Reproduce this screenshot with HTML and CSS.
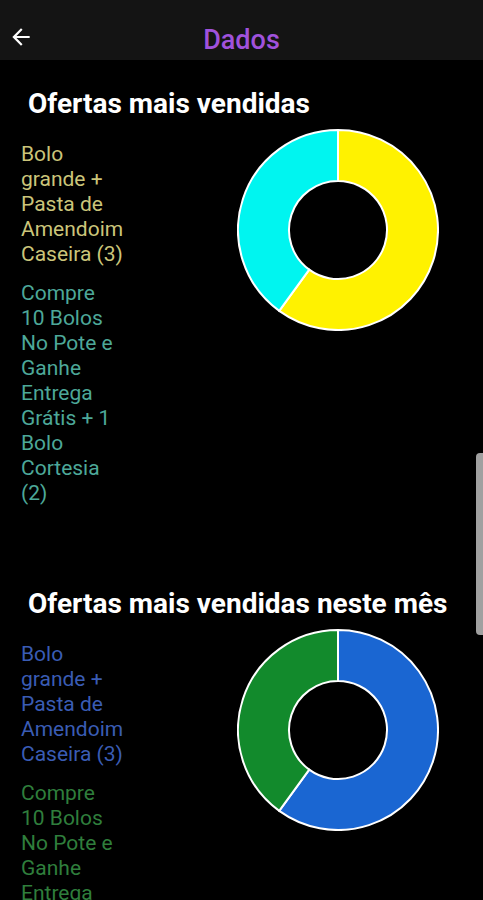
FILE: index.html
```html
<!DOCTYPE html>
<html lang="pt">
<head>
  <meta charset="UTF-8">
  <meta name="viewport" content="width=device-width, initial-scale=1.0">
  <title>Dados</title>
  <link rel="stylesheet" href="styles.css">
</head>
<body>
  <div class="header">
    <svg class="back" viewBox="0 0 24 24" width="26" height="26"><path d="M20 11H7.83l5.59-5.59L12 4l-8 8 8 8 1.41-1.41L7.83 13H20v-2z" fill="#fff"/></svg>
    <h1>Dados</h1>
  </div>

  <div class="content">
    <div class="section">
      <h2>Ofertas mais vendidas</h2>
      <div class="row">
        <div class="legend">
          <p class="c-yellow">Bolo grande + Pasta de Amendoim Caseira (3)</p>
          <p class="c-teal">Compre 10&nbsp;Bolos No Pote e Ganhe Entrega Grátis + 1 Bolo Cortesia (2)</p>
        </div>
        <svg class="donut" viewBox="0 0 202 202" width="202" height="202">
          <path d="M101 1 A100 100 0 1 1 42.22 181.90 L72.20 140.64 A49 49 0 1 0 101 52 Z" fill="#fff200"/>
          <path d="M42.22 181.90 A100 100 0 0 1 101 1 L101 52 A49 49 0 0 0 72.20 140.64 Z" fill="#00f5f0"/>
        </svg>
      </div>
    </div>

    <div class="section second">
      <h2>Ofertas mais vendidas neste mês</h2>
      <div class="row">
        <div class="legend">
          <p class="c-blue">Bolo grande + Pasta de Amendoim Caseira (3)</p>
          <p class="c-green">Compre 10&nbsp;Bolos No Pote e Ganhe Entrega Grátis + 1 Bolo Cortesia (2)</p>
        </div>
        <svg class="donut" viewBox="0 0 202 202" width="202" height="202">
          <path d="M101 1 A100 100 0 1 1 42.22 181.90 L72.20 140.64 A49 49 0 1 0 101 52 Z" fill="#1a66d2"/>
          <path d="M42.22 181.90 A100 100 0 0 1 101 1 L101 52 A49 49 0 0 0 72.20 140.64 Z" fill="#128a2c"/>
        </svg>
      </div>
    </div>
  </div>

  <div class="scrollbar"></div>
</body>
</html>
```

FILE: styles.css
```css
body {
  margin: 0;
  padding: 0;
  height: 900px;
  overflow: hidden;
  background-color: #000;
  font-family: Roboto, "Liberation Sans", sans-serif;
  color: #fff;
}

.header {
  height: 60px;
  background-color: #141414;
  display: flex;
  align-items: center;
  justify-content: center;
  position: relative;
}

.header h1 {
  margin: 0;
  font-size: 27px;
  font-weight: 500;
  color: #a052dc;
  padding-top: 20px;
}

.back {
  position: absolute;
  left: 8px;
  top: 24px;
}

.content {
  padding: 0 0 0 21px;
}

.section {
  padding-top: 29px;
}

.section.second {
  padding-top: 69px;
}

.section h2 {
  margin: 0 0 0 7px;
  font-size: 28px;
  font-weight: 700;
  line-height: 30px;
}

.row {
  display: flex;
  align-items: flex-start;
  margin-top: 10px;
}

.legend {
  width: 104px;
  flex-shrink: 0;
  padding-top: 13px;
}

.legend p {
  margin: 0 0 14px 0;
  font-size: 21px;
  line-height: 25px;
}

.donut {
  flex-shrink: 0;
  margin-left: 112px;
}

.donut path {
  stroke: #fff;
  stroke-width: 2;
}

.c-yellow { color: #cbc57a; }
.c-teal { color: #4da899; }
.c-blue { color: #3a5cb4; }
.c-green { color: #2f7e3c; }

.scrollbar {
  position: absolute;
  right: 0;
  top: 453px;
  width: 7px;
  height: 182px;
  background-color: #a0a0a0;
  border-radius: 4px 0 0 4px;
}
```
